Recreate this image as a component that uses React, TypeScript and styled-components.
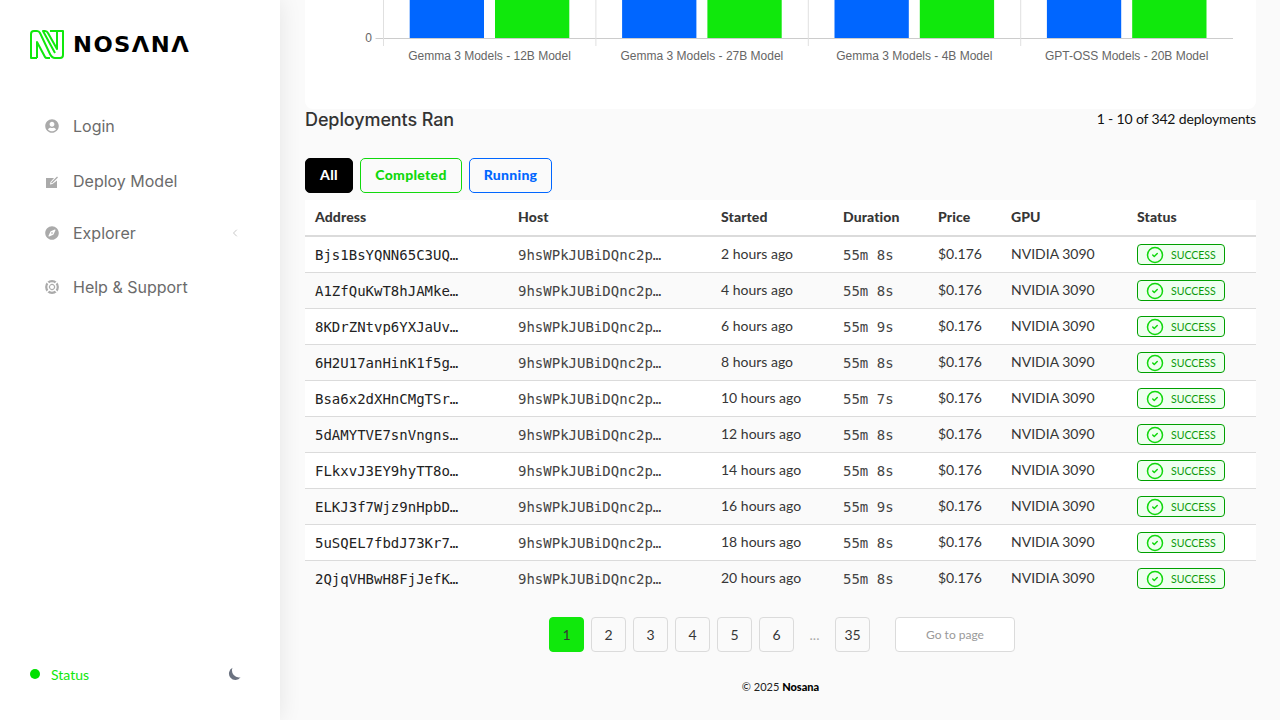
import React from 'react';
import styled, { createGlobalStyle } from 'styled-components';
import { ChevronLeft, CircleCheck } from 'lucide-react';
import { FaCompass, FaUserCircle } from 'react-icons/fa';

const GlobalStyle = createGlobalStyle`
  html, body {
    margin: 0;
    padding: 0;
    background: #fafafa;
    font-family: 'Lato', 'Liberation Sans', sans-serif;
  }
`;

const Layout = styled.div`
  display: grid;
  grid-template-columns: 280px 1fr;
  width: 1280px;
  height: 720px;
  overflow: hidden;
`;

const Sidebar = styled.aside`
  position: relative;
  z-index: 1;
  display: flex;
  flex-direction: column;
  background: #fff;
  box-shadow: 0 0 22px rgba(0, 0, 0, 0.09);
  padding: 30px 39px 38px 30px;
`;

const LogoRow = styled.div`
  display: flex;
  align-items: center;
  gap: 9px;
  height: 29px;
`;

const LogoWord = styled.span`
  display: inline-block;
  padding-top: 1px;
  font-family: 'DejaVu Sans', sans-serif;
  font-weight: 700;
  font-size: 21px;
  line-height: 29px;
  letter-spacing: 1.3px;
  color: #000;
  transform: scaleX(1.08);
  transform-origin: left center;
`;

const Nav = styled.nav`
  display: flex;
  flex-direction: column;
  margin-top: 39px;
  flex: 1;
`;

const NavItem = styled.div<{ $height: number }>`
  display: flex;
  align-items: center;
  height: ${(p) => p.$height}px;
  padding-left: 15px;
  color: #6b6b6b;
  font-family: 'Inter', sans-serif;
  font-size: 16px;
`;

const NavIcon = styled.span`
  display: flex;
  align-items: center;
  justify-content: center;
  width: 14px;
  height: 14px;
  margin-right: 14px;
  color: #aaa;
  font-size: 14px;
`;

const NavChevron = styled.span`
  display: flex;
  margin-left: auto;
  color: #c8c8c8;
`;

const SidebarFooter = styled.div`
  display: flex;
  align-items: center;
  height: 16px;
`;

const StatusDot = styled.span`
  width: 10px;
  height: 10px;
  border-radius: 50%;
  background: #00e000;
  margin-right: 11px;
`;

const StatusLabel = styled.span`
  color: #10e80c;
  font-size: 14px;
`;

const ThemeToggle = styled.span`
  display: flex;
  margin-left: auto;
`;

const Main = styled.main`
  display: flex;
  flex-direction: column;
  padding: 0 24px 0 25px;
  background: #fafafa;
  min-width: 0;
`;

const ChartCard = styled.section`
  height: 109px;
  background: #fff;
  border-radius: 0 0 8px 8px;
  overflow: hidden;
`;

const ChartSvg = styled.svg`
  display: block;
  font-family: 'Liberation Sans', sans-serif;
  font-size: 12px;
  fill: #666;
`;

const SectionHeader = styled.div`
  display: flex;
  justify-content: space-between;
  align-items: center;
  height: 20px;
`;

const SectionTitle = styled.h2`
  margin: 0;
  font-family: 'Inter', sans-serif;
  font-size: 18px;
  font-weight: 500;
  letter-spacing: -0.1px;
  color: #333;
`;

const SectionCount = styled.span`
  padding-bottom: 2px;
  font-size: 14px;
  letter-spacing: -0.16px;
  color: #111;
`;

const Filters = styled.div`
  display: flex;
  gap: 7px;
  margin-top: 29px;
`;

const FilterButton = styled.button<{ $color: string; $active?: boolean; $width: number }>`
  width: ${(p) => p.$width}px;
  height: 35px;
  padding: 0 0 2px;
  border: 1px solid ${(p) => p.$color};
  border-radius: 5px;
  background: ${(p) => (p.$active ? p.$color : 'transparent')};
  color: ${(p) => (p.$active ? '#fff' : p.$color)};
  font-family: inherit;
  font-size: 14px;
  font-weight: 900;
  letter-spacing: 0.3px;
`;

const Table = styled.table`
  width: 951px;
  margin-top: 7px;
  table-layout: fixed;
  border-collapse: separate;
  border-spacing: 0;
`;

const HeadCell = styled.th<{ $width: number }>`
  box-sizing: border-box;
  width: ${(p) => p.$width}px;
  height: 37px;
  padding: 0 10px 2px;
  background: #fff;
  border-bottom: 2px solid #dbdbdb;
  text-align: left;
  font-size: 14px;
  font-weight: 900;
  letter-spacing: 0.1px;
  color: #363636;
`;

const Row = styled.tr`
  &:nth-child(odd) td {
    background: #fff;
  }
  &:last-child td {
    height: 35px;
    border-bottom: none;
  }
`;

const Cell = styled.td`
  box-sizing: border-box;
  height: 36px;
  padding: 0 10px 2px;
  border-bottom: 1px solid #dbdbdb;
  font-size: 14px;
  color: #363636;
  white-space: nowrap;
`;

const MonoCell = styled(Cell)<{ $strong?: boolean }>`
  padding: 0 10px;
  font-family: 'DejaVu Sans Mono', monospace;
  color: ${(p) => (p.$strong ? '#222' : '#444')};
`;

const StatusCell = styled(Cell)`
  padding: 0 10px;
`;

const StatusBadge = styled.span`
  display: flex;
  align-items: center;
  box-sizing: border-box;
  width: 88px;
  height: 21px;
  padding-left: 8px;
  border: 1px solid #00a000;
  border-radius: 4px;
  background: #effff0;
  color: #0a9a0a;
  font-size: 10.5px;
`;

const BadgeIcon = styled(CircleCheck)`
  flex: none;
  margin-right: 7px;
  color: #10d80c;
`;

const Pagination = styled.div`
  display: flex;
  justify-content: center;
  gap: 7px;
  margin-top: 21px;
  padding-left: 3px;
`;

const PageButton = styled.span<{ $current?: boolean }>`
  display: flex;
  align-items: center;
  justify-content: center;
  box-sizing: border-box;
  width: 35px;
  height: 35px;
  border: 1px solid ${(p) => (p.$current ? '#10e80c' : '#dbdbdb')};
  border-radius: 4px;
  background: ${(p) => (p.$current ? '#10e80c' : 'transparent')};
  font-size: 14px;
  color: #363636;
`;

const PageGap = styled.span`
  display: flex;
  align-items: center;
  justify-content: center;
  width: 27px;
  font-size: 14px;
  color: #aaa;
`;

const GoToPage = styled.span`
  display: flex;
  align-items: center;
  justify-content: center;
  box-sizing: border-box;
  width: 120px;
  height: 35px;
  margin-left: 18px;
  border: 1px solid #dbdbdb;
  border-radius: 4px;
  background: #fff;
  font-size: 12px;
  color: #999;
`;

const Footer = styled.footer`
  margin-top: 28px;
  text-align: center;
  font-size: 11px;
  line-height: 14px;
  color: #222;

  strong {
    color: #000;
    font-weight: 900;
  }
`;

const rows = [
  ['Bjs1BsYQNN65C3UQ…', '2 hours ago', '55m 8s'],
  ['A1ZfQuKwT8hJAMke…', '4 hours ago', '55m 8s'],
  ['8KDrZNtvp6YXJaUv…', '6 hours ago', '55m 9s'],
  ['6H2U17anHinK1f5g…', '8 hours ago', '55m 8s'],
  ['Bsa6x2dXHnCMgTSr…', '10 hours ago', '55m 7s'],
  ['5dAMYTVE7snVngns…', '12 hours ago', '55m 8s'],
  ['FLkxvJ3EY9hyTT8o…', '14 hours ago', '55m 8s'],
  ['ELKJ3f7Wjz9nHpbD…', '16 hours ago', '55m 9s'],
  ['5uSQEL7fbdJ73Kr7…', '18 hours ago', '55m 8s'],
  ['2QjqVHBwH8FjJefK…', '20 hours ago', '55m 8s'],
];

const columns = [
  ['Address', 203],
  ['Host', 203],
  ['Started', 122],
  ['Duration', 95],
  ['Price', 73],
  ['GPU', 126],
  ['Status', 129],
] as const;

const chartGroups = [
  { label: 'Gemma 3 Models - 12B Model', x: 78 },
  { label: 'Gemma 3 Models - 27B Model', x: 290.4 },
  { label: 'Gemma 3 Models - 4B Model', x: 502.8 },
  { label: 'GPT-OSS Models - 20B Model', x: 715.2 },
];

const LogoMark = () => (
  <svg width="34" height="29" viewBox="0 0 34 29" fill="none" stroke="#10e80c" strokeWidth="2" strokeLinejoin="round">
    <path d="M7 28H1V4Q1 1 4 1H7Q9 1 10 3L20 24Q22 28 25 28H30Q33 28 33 25V1H27V19L18 3Q17 1 15 1H13L25 23" />
    <path d="M7 28V12L15 27Q15.5 28 17 28H20" />
    <path d="M20 1H27" />
  </svg>
);

const DeployIcon = () => (
  <svg width="14" height="14" viewBox="0 0 14 14">
    <path d="M1 4H9L5.5 8 5 10.5 7.5 10 12 6.5V15H1Z" fill="#aaa" />
    <path d="M6.5 9L12.5 3" stroke="#aaa" strokeWidth="1.3" />
  </svg>
);

const HelpIcon = () => (
  <svg width="14" height="14" viewBox="0 0 14 14" fill="none" stroke="#aaa">
    <circle cx="7" cy="7" r="5.8" strokeWidth="2.2" />
    <circle cx="7" cy="7" r="2.6" strokeWidth="1.2" />
    <path d="M2 2L5 5M12 2L9 5M2 12L5 9M12 12L9 9" stroke="#fff" strokeWidth="1.4" />
  </svg>
);

const MoonIcon = () => (
  <svg width="14" height="14" viewBox="0 0 14 14">
    <path d="M5.5 .8A6.4 6.4 0 1 0 13.6 10.2 7 7 0 0 1 5.5 .8Z" fill="#6b7280" />
  </svg>
);

const App: React.FC = () => (
  <Layout>
    <GlobalStyle />
    <Sidebar>
      <LogoRow>
        <LogoMark />
        <LogoWord>NOSΛNΛ</LogoWord>
      </LogoRow>
      <Nav>
        <NavItem $height={56}>
          <NavIcon><FaUserCircle /></NavIcon>
          Login
        </NavItem>
        <NavItem $height={54}>
          <NavIcon><DeployIcon /></NavIcon>
          Deploy Model
        </NavItem>
        <NavItem $height={50}>
          <NavIcon><FaCompass /></NavIcon>
          Explorer
          <NavChevron><ChevronLeft size={12} /></NavChevron>
        </NavItem>
        <NavItem $height={58}>
          <NavIcon><HelpIcon /></NavIcon>
          Help &amp; Support
        </NavItem>
      </Nav>
      <SidebarFooter>
        <StatusDot />
        <StatusLabel>Status</StatusLabel>
        <ThemeToggle><MoonIcon /></ThemeToggle>
      </SidebarFooter>
    </Sidebar>
    <Main>
      <ChartCard>
        <ChartSvg width="951" height="109" viewBox="0 0 951 109">
          <line x1="70.5" y1="38.5" x2="928" y2="38.5" stroke="#ccc" />
          {chartGroups.map((g) => (
            <g key={g.label}>
              <line x1={g.x + 0.5} y1="0" x2={g.x + 0.5} y2="46" stroke="#e0e0e0" />
              <rect x={g.x + 26.7} y="0" width="74.3" height="38" fill="#0066ff" />
              <rect x={g.x + 112} y="0" width="74.3" height="38" fill="#10e80c" />
              <text x={g.x + 106.5} y="60" textAnchor="middle">{g.label}</text>
            </g>
          ))}
          <text x="67" y="42" textAnchor="end">0</text>
        </ChartSvg>
      </ChartCard>
      <SectionHeader>
        <SectionTitle>Deployments Ran</SectionTitle>
        <SectionCount>1 - 10 of 342 deployments</SectionCount>
      </SectionHeader>
      <Filters>
        <FilterButton $color="#000" $active $width={48}>All</FilterButton>
        <FilterButton $color="#10d80c" $width={102}>Completed</FilterButton>
        <FilterButton $color="#0066ff" $width={83}>Running</FilterButton>
      </Filters>
      <Table>
        <thead>
          <tr>
            {columns.map(([name, width]) => (
              <HeadCell key={name} $width={width}>{name}</HeadCell>
            ))}
          </tr>
        </thead>
        <tbody>
          {rows.map(([address, started, duration]) => (
            <Row key={address}>
              <MonoCell $strong>{address}</MonoCell>
              <MonoCell>9hsWPkJUBiDQnc2p…</MonoCell>
              <Cell>{started}</Cell>
              <MonoCell>{duration}</MonoCell>
              <Cell>$0.176</Cell>
              <Cell>NVIDIA 3090</Cell>
              <StatusCell>
                <StatusBadge>
                  <BadgeIcon size={18} strokeWidth={2} />
                  SUCCESS
                </StatusBadge>
              </StatusCell>
            </Row>
          ))}
        </tbody>
      </Table>
      <Pagination>
        <PageButton $current>1</PageButton>
        <PageButton>2</PageButton>
        <PageButton>3</PageButton>
        <PageButton>4</PageButton>
        <PageButton>5</PageButton>
        <PageButton>6</PageButton>
        <PageGap>...</PageGap>
        <PageButton>35</PageButton>
        <GoToPage>Go to page</GoToPage>
      </Pagination>
      <Footer>© 2025 <strong>Nosana</strong></Footer>
    </Main>
  </Layout>
);

export default App;
